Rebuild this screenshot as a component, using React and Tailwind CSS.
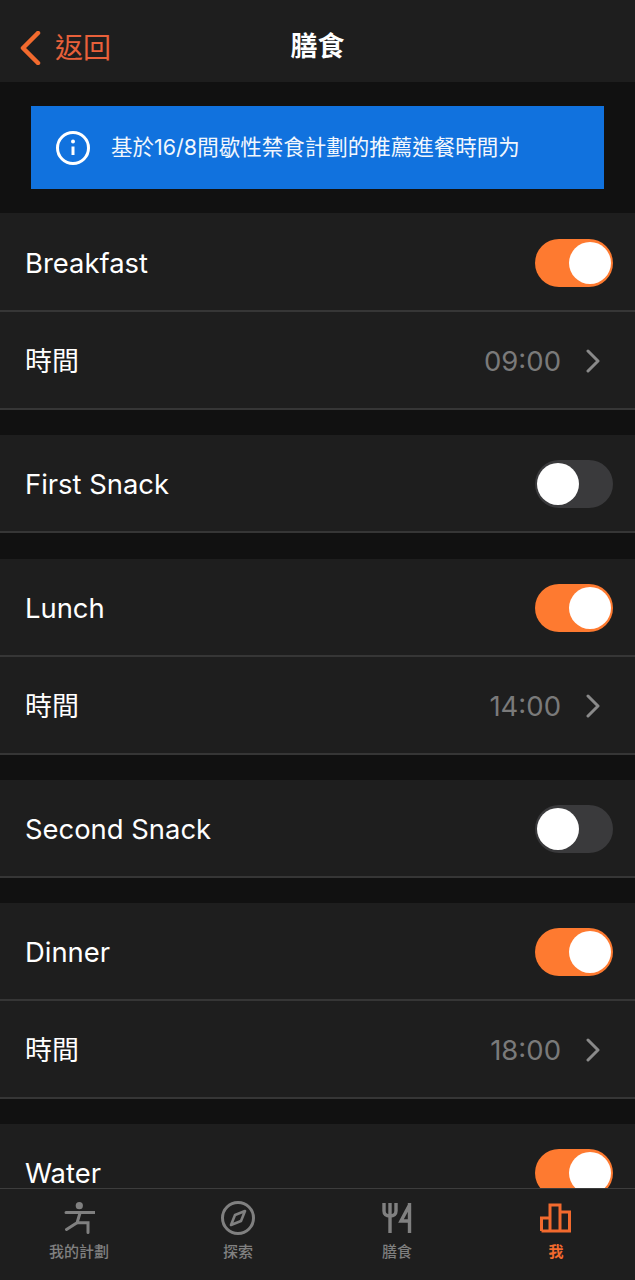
import React from 'react';

const FONT = "font-['Inter','Noto_Sans_CJK_TC',sans-serif]";

function Toggle({ on }) {
  if (on) {
    return (
      <div className="flex h-[48px] w-[78px] items-center justify-end rounded-full bg-[#fe7a30] pr-[2px]">
        <div className="h-[42px] w-[42px] rounded-full bg-white" />
      </div>
    );
  }
  return (
    <div className="flex h-[48px] w-[78px] items-center justify-start rounded-full bg-[#3a3a3c] pl-[2px]">
      <div className="h-[42px] w-[42px] rounded-full bg-white" />
    </div>
  );
}

function Row({ children }) {
  return (
    <div className="flex h-[98px] shrink-0 items-center justify-between border-b-2 border-[#363636] bg-[#1e1e1e] pl-[25px] pr-[22px] pt-[2px]">
      {children}
    </div>
  );
}

function MealSection({ name, on, time, className }) {
  return (
    <div className={className}>
      <Row>
        <span className="mt-[1px] text-[27.4px] text-white">{name}</span>
        <Toggle on={on} />
      </Row>
      {time && (
        <Row>
          <span className="mt-[2px] text-[27px] text-white">時間</span>
          <div className="flex items-center gap-[25px] pr-[13px]">
            <span className="mt-[2px] text-[27.5px] text-[#7a7a7a]">{time}</span>
            <svg width="14" height="24" viewBox="0 0 14 24" fill="none">
              <path d="M2 2 L12 12 L2 22" stroke="#8a8a8a" strokeWidth="3" strokeLinecap="round" strokeLinejoin="round" />
            </svg>
          </div>
        </Row>
      )}
    </div>
  );
}

function TabItem({ label, active, children }) {
  return (
    <div className={`flex w-[158px] flex-col items-center ${active ? 'text-[#f26a2e]' : 'text-[#808080]'}`}>
      <div className="flex h-[36px] items-center justify-center">{children}</div>
      <span className={`mt-[6px] text-[15px] leading-[20px] ${active ? 'font-bold' : 'font-medium'}`}>{label}</span>
    </div>
  );
}

export default function App() {
  return (
    <div className={`flex h-[1280px] w-[635px] flex-col overflow-hidden bg-[#111111] ${FONT}`}>
      <div className="relative flex h-[82px] shrink-0 items-center bg-[#1e1e1e] pl-[18px] pt-[13px]">
        <svg width="24" height="34" viewBox="0 0 24 34" fill="none">
          <path d="M20 2 L5 17 L20 32" stroke="#f26a2e" strokeWidth="4.5" strokeLinecap="round" strokeLinejoin="round" />
        </svg>
        <span className="ml-[13px] text-[28px] text-[#e8603a]">返回</span>
        <span className="absolute left-0 right-0 text-center text-[27px] font-bold text-white">膳食</span>
      </div>

      <div className="flex-1 overflow-hidden">
        <div className="py-[24px] pl-[31px] pr-[31px]">
          <div className="flex h-[83px] items-center bg-[#1172de] pl-[24px]">
            <svg width="36" height="36" viewBox="0 0 36 36" fill="none">
              <circle cx="18" cy="18" r="15.5" stroke="white" strokeWidth="3" />
              <circle cx="18" cy="11.5" r="2" fill="white" />
              <path d="M18 16.5 V25" stroke="white" strokeWidth="3" />
            </svg>
            <span className="ml-[20px] text-[21.5px] text-[#f2f7fd]">基於16/8間歇性禁食計劃的推薦進餐時間为</span>
          </div>
        </div>

        <MealSection name="Breakfast" on time="09:00" className="bg-[#1e1e1e] pt-[1px]" />
        <MealSection name="First Snack" className="mt-[25px]" />
        <MealSection name="Lunch" on time="14:00" className="mt-[26px]" />
        <MealSection name="Second Snack" className="mt-[25px]" />
        <MealSection name="Dinner" on time="18:00" className="mt-[25px]" />
        <MealSection name="Water" on className="mt-[25px]" />
      </div>

      <div className="flex h-[92px] shrink-0 justify-between border-t border-[#3d3d3d] bg-[#1e1e1e] pt-[11px]">
        <TabItem label="我的計劃">
          <svg width="32" height="32" viewBox="0 0 32 32" fill="none">
            <circle cx="16.3" cy="3.7" r="3.6" fill="currentColor" />
            <path d="M3 10.5 H32 M17 11 L14 21 M14 20.8 H25 V30.5 M14 20.8 L3.5 27.5" stroke="currentColor" strokeWidth="3" strokeLinecap="round" />
          </svg>
        </TabItem>
        <TabItem label="探索">
          <svg width="36" height="36" viewBox="0 0 36 36" fill="none">
            <circle cx="18" cy="18" r="15.5" stroke="currentColor" strokeWidth="3" />
            <path d="M25 11 L21 21 L11 25 L15 15 Z" stroke="currentColor" strokeWidth="2.6" strokeLinejoin="round" />
          </svg>
        </TabItem>
        <TabItem label="膳食">
          <svg width="30" height="32" viewBox="0 0 30 32" fill="none">
            <path d="M2 1 V9 Q2 14 8 14 Q14 14 14 9 V1 M8 1 V31" stroke="currentColor" strokeWidth="3.4" />
            <path d="M27.5 1 V31 M27.5 3 L19 19 H28" stroke="currentColor" strokeWidth="3.4" />
          </svg>
        </TabItem>
        <TabItem label="我" active>
          <svg width="32" height="30" viewBox="0 0 32 30" fill="none">
            <path d="M1.5 28 V15 H10 V28 M10 28 V2 H20 V28 M20 9 H29.5 V28 H1.5" stroke="currentColor" strokeWidth="3" />
          </svg>
        </TabItem>
      </div>
    </div>
  );
}
